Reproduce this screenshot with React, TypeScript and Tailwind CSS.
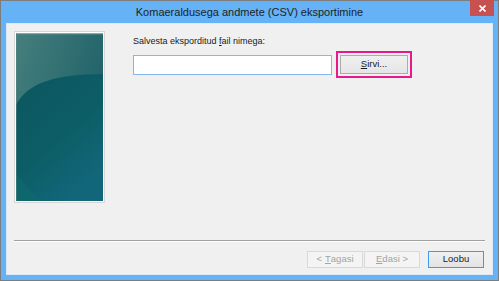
const font = { fontFamily: '"Liberation Sans", Arial, sans-serif' };

function SidePanel() {
  return (
    <div className="h-[172px] w-[91px] border border-[#d6d6d6] bg-white p-px">
      <svg width="87" height="168" viewBox="0 0 87 168" className="block">
        <defs>
          <linearGradient id="top" x1="0" y1="0" x2="1" y2="0.6">
            <stop offset="0" stopColor="#467f7d" />
            <stop offset="1" stopColor="#1b5f66" />
          </linearGradient>
          <linearGradient id="low" x1="0" y1="0" x2="0.6" y2="1">
            <stop offset="0" stopColor="#0c5660" />
            <stop offset="0.6" stopColor="#0c5e66" />
            <stop offset="1" stopColor="#12667a" />
          </linearGradient>
          <linearGradient id="edge" x1="0" y1="0" x2="0" y2="1">
            <stop offset="0" stopColor="#9fb7b6" />
            <stop offset="1" stopColor="#5c8c8b" />
          </linearGradient>
        </defs>
        <rect width="87" height="168" fill="url(#top)" />
        <path d="M0 168 L0 72 C10 52 35 41 87 41 L87 168 Z" fill="url(#low)" />
        <path d="M0 168 L0 140 C10 152 18 162 26 168 Z" fill="#0f6a6c" opacity="0.6" />
        <rect width="87" height="1.5" fill="url(#edge)" />
        <rect width="1" height="168" fill="#5d8886" opacity="0.5" />
      </svg>
    </div>
  );
}

function Btn({
  children,
  disabled,
  primary,
}: {
  children: React.ReactNode;
  disabled?: boolean;
  primary?: boolean;
}) {
  return (
    <div
      className={
        "flex h-[17px] w-[56px] items-center justify-center border text-[9.5px] " +
        (disabled
          ? "border-[#d9d9d9] bg-[#f4f4f4] text-[#a3a3a3]"
          : primary
          ? "border-[#3c9af0] bg-gradient-to-b from-[#f0f0f0] to-[#e3e3e3] text-[#1a1a1a]"
          : "border-[#adadad] bg-gradient-to-b from-[#f0f0f0] to-[#e3e3e3] text-[#1a1a1a]")
      }
    >
      {children}
    </div>
  );
}

export default function App() {
  return (
    <div className="h-[281px] w-[499px] bg-white" style={font}>
      <div className="flex h-[281px] w-[499px] flex-col border border-[#7d7d7d] bg-[#65b2f6]">
        <div className="relative flex h-[22px] items-center justify-center">
          <span className="pt-[1px] text-[11px] text-[#1e1e1e]">
            Komaeraldusega andmete (CSV) eksportimine
          </span>
          <div className="absolute right-[4px] top-[-1px] flex h-[16px] w-[24px] items-center justify-center bg-[#c75050]">
            <svg width="7" height="7" viewBox="0 0 7 7">
              <path d="M0.5 0.5 L6.5 6.5 M6.5 0.5 L0.5 6.5" stroke="white" strokeWidth="1.6" />
            </svg>
          </div>
        </div>
        <div className="mx-[5px] mb-[5px] flex flex-1 flex-col border border-[#dce8f4] bg-[#f0f0f0]">
          <div className="flex flex-1 pl-[7px] pt-[7px]">
            <SidePanel />
            <div className="ml-[28px] flex flex-col pt-[4px]">
              <div className="text-[9px] leading-[13px] text-[#1a1a1a]">
                Salvesta eksporditud <span className="underline">f</span>ail nimega:
              </div>
              <div className="mt-[3px] flex items-center">
                <div className="h-[20px] w-[199px] border border-[#86b7e8] bg-white" />
                <div className="ml-[4px] border-2 border-[#e8198b] p-[2px]">
                  <div className="flex h-[19px] w-[68px] items-center justify-center border border-[#acacac] bg-gradient-to-b from-[#f0f0f0] to-[#e5e5e5] text-[9.5px] text-[#1a1a1a]">
                    <span className="underline">S</span>irvi...
                  </div>
                </div>
              </div>
            </div>
          </div>
          <div className="mx-[7px] mt-px border-t border-[#a0a0a0] shadow-[0_1px_0_#ffffff]" />
          <div className="flex justify-end px-[8px] pb-[6px] pt-[10px]">
            <Btn disabled>
              &lt; <span className="ml-[3px] underline">T</span>agasi
            </Btn>
            <div className="ml-[1px]">
              <Btn disabled>
                <span className="underline">E</span>dasi &gt;
              </Btn>
            </div>
            <div className="ml-[8px]">
              <Btn primary>Loobu</Btn>
            </div>
          </div>
        </div>
      </div>
    </div>
  );
}
